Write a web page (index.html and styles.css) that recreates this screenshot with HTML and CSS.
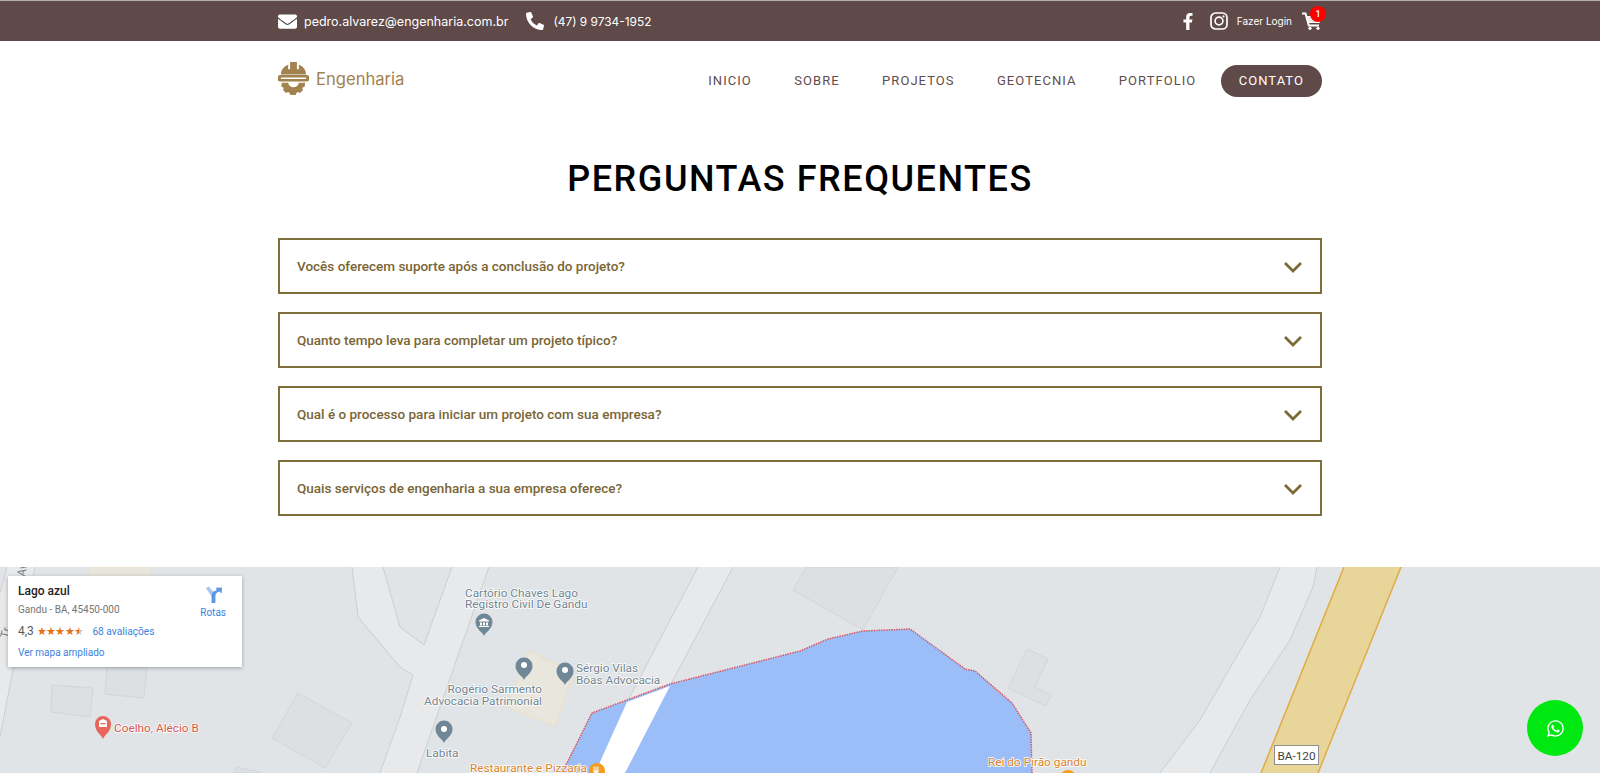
FILE: index.html
```html
<!DOCTYPE html>
<html lang="pt-BR">
<head>
<meta charset="utf-8">
<title>Engenharia</title>
<link rel="stylesheet" href="styles.css">
</head>
<body>
<div class="topbar">
  <div class="container topbar-inner">
    <div class="contact">
      <a class="contact-item">
        <svg class="ico-mail" viewBox="0 0 512 512"><path d="M502.3 190.8c3.9-3.1 9.7-.2 9.7 4.7V400c0 26.5-21.5 48-48 48H48c-26.5 0-48-21.5-48-48V195.6c0-5 5.7-7.8 9.7-4.7 22.4 17.4 52.1 39.5 154.1 113.6 21.1 15.4 56.7 47.8 92.2 47.6 35.7.3 72-32.8 92.3-47.6 102-74.1 131.6-96.3 154-113.7zM256 320c23.2.4 56.6-29.2 73.4-41.4 132.7-96.3 142.8-104.7 173.4-128.7 5.8-4.5 9.2-11.5 9.2-18.9v-19c0-26.5-21.5-48-48-48H48C21.5 64 0 85.5 0 112v19c0 7.4 3.4 14.3 9.2 18.9 30.6 23.9 40.7 32.4 173.4 128.7 16.8 12.2 50.2 41.8 73.4 41.4z"/></svg>
        <span>pedro.alvarez@engenharia.com.br</span>
      </a>
      <a class="contact-item contact-phone">
        <svg class="ico-phone" viewBox="0 0 512 512"><path transform="matrix(-1 0 0 1 512 0)" d="M493.4 24.6l-104-24c-11.3-2.6-22.9 3.3-27.5 13.9l-48 112c-4.2 9.8-1.4 21.3 6.9 28l60.6 49.6c-36 76.7-98.9 140.5-177.2 177.2l-49.6-60.6c-6.8-8.3-18.2-11.1-28-6.9l-112 48C3.9 366.5-2 378.1.6 389.4l24 104C27.1 504.2 36.7 512 48 512c256.1 0 464-207.5 464-464 0-11.2-7.7-20.9-18.6-23.4z"/></svg>
        <span>(47) 9 9734-1952</span>
      </a>
    </div>
    <div class="account">
      <svg class="ico-fb" viewBox="0 0 320 512"><path d="M279.14 288l14.22-92.66h-88.91v-60.13c0-25.35 12.42-50.06 52.24-50.06h40.42V6.26S260.43 0 225.36 0c-73.22 0-121.08 44.38-121.08 124.72v70.62H22.89V288h81.39v224h100.17V288z"/></svg>
      <svg class="ico-ig" viewBox="0 0 18 18"><rect x="1" y="1" width="16" height="16" rx="4.6" class="ig-line"/><circle cx="9" cy="9" r="3.9" class="ig-line"/><circle cx="13.6" cy="4.4" r="1.05"/></svg>
      <span class="login">Fazer Login</span>
      <div class="cart">
        <svg class="ico-cart" viewBox="0 0 20 18">
          <path class="cart-line" d="M0 1.500H3.500L6.800 13.500H17"/>
          <path class="cart-basket" d="M4.800 4.500H19L17.400 10.500H6.400z"/>
          <circle cx="8" cy="16.300" r="1.600"/><circle cx="16" cy="16.300" r="1.600"/>
        </svg>
        <span class="badge">1</span>
      </div>
    </div>
  </div>
</div>

<header class="container header">
  <a class="brand">
    <svg class="logo" viewBox="0 0 32 35">
      <path d="M3 14C3 9 6 5.500 10.500 3.700V8.500h2V1h7v7.500h2V3.700C26.200 5.500 29 9 29 14z"/>
      <path fill-rule="evenodd" d="M2.500 14.500h27a2.500 2.500 0 0 1 0 6.500h-27a2.500 2.500 0 0 1 0-6.500zM3 17v1.500h26V17z"/>
      <path d="M4 22.500h6.500a5.600 5.600 0 0 0 11 0H28l-.5 4-2.500 1 .8 2.500-3 3-2.300-1-1.500.9-.8 2.100h-5.400l-.8-2.100-1.500-.9-2.300 1-3-3 .8-2.500-2.500-1z"/>
    </svg>
    <span class="brand-name">Engenharia</span>
  </a>
  <nav class="nav">
    <a class="nav-link">INICIO</a>
    <a class="nav-link">SOBRE</a>
    <a class="nav-link">PROJETOS</a>
    <a class="nav-link">GEOTECNIA</a>
    <a class="nav-link">PORTFOLIO</a>
    <a class="nav-cta">CONTATO</a>
  </nav>
</header>

<main class="container faq">
  <h1 class="faq-title">PERGUNTAS FREQUENTES</h1>
  <div class="faq-list">
    <div class="faq-item"><span>Vocês oferecem suporte após a conclusão do projeto?</span><svg class="chev" viewBox="0 0 18 10"><path d="M1 1l8 8 8-8"/></svg></div>
    <div class="faq-item"><span>Quanto tempo leva para completar um projeto típico?</span><svg class="chev" viewBox="0 0 18 10"><path d="M1 1l8 8 8-8"/></svg></div>
    <div class="faq-item"><span>Qual é o processo para iniciar um projeto com sua empresa?</span><svg class="chev" viewBox="0 0 18 10"><path d="M1 1l8 8 8-8"/></svg></div>
    <div class="faq-item"><span>Quais serviços de engenharia a sua empresa oferece?</span><svg class="chev" viewBox="0 0 18 10"><path d="M1 1l8 8 8-8"/></svg></div>
  </div>
</main>

<section class="map">
  <svg class="map-canvas" viewBox="0 567 1600 206" preserveAspectRatio="none">
    <!-- local roads -->
    <path class="road" d="M7 567L0 593V737L13 670L35 567z"/>
    <path class="road-edge" d="M35 567L13 670L0 737M7 567L0 593"/>
    <path class="road" d="M352 567L358 617L400 667L413 675L380 773H417L489 567H452L424 645L400 627L383 567z"/>
    <path class="road-edge" d="M352 567L358 617L400 667L413 675L400 717L380 773M383 567L400 627L424 645L452 567M489 567L417 773"/>
    <path class="road" d="M698 567L627 702L595 773H625L670 686L733 567z"/>
    <path class="road-edge" d="M698 567L627 702M733 567L670 686"/>
    <path class="road" d="M1280 567L1260 617L1227 673L1200 720L1160 773H1210L1250 700L1290 640L1313 587L1317 567z"/>
    <path class="road-edge" d="M1280 567L1260 617L1227 673L1200 720L1160 773M1317 567L1313 587L1290 640L1250 700L1210 773"/>
    <!-- buildings -->
    <path class="bld" d="M52 685L93 688L90 717L51 712z"/>
    <path class="bld" d="M107 667H147L144 698L105 694z"/>
    <path class="bld" d="M298 693L352 723L325 768L272 738z"/>
    <path class="bld" d="M233 773L237 767L263 773z"/>
    <path class="bld" d="M793 590L806 567H898L863 630z"/>
    <path class="bld" d="M1027 649L1048 659L1035 687L1051 695L1046 706L1008 688z"/>
    <path class="parcel" d="M90 567H152L150 580H90z"/>
    <path class="parcel" d="M528 651L574 672L555 726L507 707z"/>
    <!-- lake with the strip crossing it -->
    <path class="lake" d="M592 713L670 684L800 651L828 639L863 631L910 629L965 669L975 671L1012 703L1031 733L1032 773H560L567 763z"/>
    <path class="strip" d="M627 702L670 686L625 773H595z"/>
    <path class="lake-edge" d="M560 773L567 763L592 713L670 684L800 651L828 639L863 631L910 629L965 669L975 671L1012 703L1031 733L1032 773"/>
    <!-- highway -->
    <path class="highway" d="M1344 567L1261 773H1318L1401 567z"/>
    <path class="highway-edge" d="M1344 567L1261 773M1401 567L1318 773"/>
    <!-- pins -->
    <g class="pin-gray">
      <path d="M484 636c-1.500-4-8.500-7-8.500-14a8.500 8.500 0 0 1 17 0c0 7-7 10-8.500 14z"/>
      <path d="M524 680c-1.500-4-8.500-7-8.500-14a8.500 8.500 0 0 1 17 0c0 7-7 10-8.500 14z"/>
      <path d="M565 685c-1.500-4-8.500-7-8.500-14a8.500 8.500 0 0 1 17 0c0 7-7 10-8.500 14z"/>
      <path d="M444 743c-1.500-4-8.500-7-8.500-14a8.500 8.500 0 0 1 17 0c0 7-7 10-8.500 14z"/>
    </g>
    <g class="pin-dot">
      <circle cx="524" cy="665" r="3"/><circle cx="565" cy="670" r="3"/><circle cx="444" cy="729" r="3"/>
      <path d="M479 620.500l5-2.500 5 2.500v1h-10zM480 622.500h2v3h-2zM483 622.500h2v3h-2zM486 622.500h2v3h-2zM479 626h10v1h-10z"/>
    </g>
    <path class="pin-red" d="M103 739c-1.500-4-8-7-8-15a8 8 0 0 1 16 0c0 8-6.500 11-8 15z"/>
    <path class="pin-red-in" d="M99 721l4-2 4 2v6h-8zM100.500 723v1.200h5V723z"/>
    <circle class="pin-orange" cx="597" cy="771" r="8"/>
    <path class="pin-dot" d="M593.500 766.500h1v4h1v-4h1v4h1v-4h1v6h-1v1h-3v-1h-1z"/>
    <circle class="pin-orange" cx="1068" cy="778" r="8"/>
    <!-- labels -->
    <g class="lbl-gray">
      <text x="465" y="597">Cartório Chaves Lago</text>
      <text x="465" y="608">Registro Civil De Gandu</text>
      <text x="576" y="672">Sérgio Vilas</text>
      <text x="576" y="684">Bôas Advocacia</text>
      <text x="542" y="693" text-anchor="end">Rogério Sarmento</text>
      <text x="542" y="705" text-anchor="end">Advocacia Patrimonial</text>
      <text x="426" y="757">Labita</text>
    </g>
    <g class="lbl-orange">
      <text x="587" y="772" text-anchor="end">Restaurante e Pizzaria</text>
      <text x="988" y="766">Rei do Pirão gandu</text>
    </g>
    <text class="lbl-red" x="114" y="732">Coelho, Alécio B</text>
    <text class="lbl-road" transform="translate(8 639) rotate(-75)">Tr...</text>
    <text class="lbl-road" transform="translate(25 577) rotate(-80)">Av</text>
    <rect class="shield" x="1274.500" y="745.500" width="44" height="19"/>
    <text class="shield-text" x="1296.500" y="760" text-anchor="middle">BA-120</text>
  </svg>

  <div class="place-card">
    <div class="place-info">
      <div class="place-name">Lago azul</div>
      <div class="place-addr">Gandu - BA, 45450-000</div>
      <div class="place-rating">
        <span class="score">4,3</span>
        <span class="stars">★★★★<span class="star-part">★</span></span>
        <a class="link reviews">68 avaliações</a>
      </div>
      <a class="link bigger">Ver mapa ampliado</a>
    </div>
    <a class="directions">
      <svg class="dir-ico" viewBox="0 0 20 20"><path class="dir-a" d="M2 3.500L5 1.500 11 8.500V12H8z"/><path class="dir-b" d="M8 19V11.500C8 8 10 6 13 6V2.500L19 3 18.500 9 16 6.800C13.500 7.500 12 9 12 12V19z"/></svg>
      <span>Rotas</span>
    </a>
  </div>
</section>

<a class="whats">
  <svg viewBox="0 0 448 512"><path d="M380.9 97.1C339 55.1 283.2 32 223.9 32c-122.4 0-222 99.6-222 222 0 39.1 10.2 77.3 29.6 111L0 480l117.7-30.9c32.4 17.7 68.9 27 106.1 27h.1c122.3 0 224.1-99.6 224.1-222 0-59.3-25.2-115-67.1-157zm-157 341.6c-33.2 0-65.7-8.9-94-25.7l-6.7-4-69.8 18.3L72 359.2l-4.4-7c-18.5-29.4-28.2-63.3-28.2-98.2 0-101.7 82.8-184.5 184.6-184.5 49.3 0 95.6 19.2 130.4 54.1 34.8 34.9 56.2 81.2 56.1 130.5 0 101.8-84.9 184.6-186.6 184.6zm101.2-138.2c-5.5-2.8-32.8-16.2-37.9-18-5.1-1.9-8.8-2.8-12.5 2.8-3.7 5.6-14.3 18-17.6 21.8-3.2 3.7-6.5 4.2-12 1.4-32.6-16.3-54-29.1-75.5-66-5.7-9.8 5.7-9.1 16.3-30.3 1.8-3.7.9-6.9-.5-9.7-1.4-2.8-12.5-30.1-17.1-41.2-4.5-10.8-9.1-9.3-12.5-9.5-3.2-.2-6.9-.2-10.6-.2-3.7 0-9.7 1.4-14.8 6.9-5.1 5.6-19.4 19-19.4 46.3 0 27.3 19.9 53.7 22.6 57.4 2.8 3.7 39.1 59.7 94.8 83.8 35.2 15.2 49 16.5 66.6 13.9 10.7-1.6 32.8-13.4 37.4-26.4 4.6-13 4.6-24.1 3.2-26.4-1.3-2.5-5-3.9-10.5-6.6z"/></svg>
</a>
</body>
</html>
```
FILE: styles.css
```css
* { box-sizing: border-box; }
html, body { height: 100%; }
body {
  margin: 0;
  height: 773px;
  overflow: hidden;
  display: flex;
  flex-direction: column;
  font-family: Roboto, "Liberation Sans", sans-serif;
  background: #fff;
}
.container { width: 1044px; margin: 0 auto; }

/* top bar */
.topbar {
  height: 41px;
  background: #604949;
  border-top: 1px solid #b3b0b0;
  color: #fff;
  flex: none;
}
.topbar-inner { height: 100%; display: flex; justify-content: space-between; align-items: center; }
.contact { display: flex; align-items: center; gap: 18px; }
.contact-item { display: flex; align-items: center; font-family: Inter, sans-serif; font-size: 12.5px; }
.contact-phone { font-size: 11.9px; }
.contact-item svg { fill: #fff; flex: none; }
.ico-mail { width: 19px; height: 19px; margin-right: 7px; }
.ico-phone { width: 18px; height: 18px; margin-right: 9px; }
.account { display: flex; align-items: center; }
.account svg { fill: #fff; }
.ico-fb { width: 12px; height: 17px; margin-right: 16px; }
.ico-ig { width: 18px; height: 18px; margin-right: 9px; }
.ig-line { fill: none; stroke: #fff; stroke-width: 1.7; }
.login { font-family: Inter, sans-serif; font-size: 10px; margin-right: 10px; }
.cart { position: relative; width: 20px; height: 18px; }
.ico-cart { width: 20px; height: 18px; display: block; }
.cart-line { fill: none; stroke: #fff; stroke-width: 2; }
.cart-basket { fill: #ebe7e7; stroke: #fff; stroke-width: 1; }
.badge {
  position: absolute; left: 8px; top: -6px;
  width: 16px; height: 16px; border-radius: 50%;
  background: #f00; color: #fff;
  font: 500 9px/16px Roboto, sans-serif; text-align: center;
}

/* header */
.header { display: flex; justify-content: space-between; align-items: center; height: 80px; flex: none; }
.brand { display: flex; align-items: center; gap: 7px; margin-bottom: 4px; }
.logo { width: 31px; height: 34px; fill: #a2824e; margin-bottom: 2px; }
.brand-name { font-family: Inter, sans-serif; font-size: 16.6px; color: #a2824e; }
.nav { display: flex; align-items: center; gap: 42.4px; }
.nav-link { font-size: 13px; letter-spacing: 1.05px; color: #5f4d4d; margin-bottom: 1px; }
.nav-cta {
  margin-left: -18px;
  padding: 0 18px;
  height: 32px; line-height: 32px;
  background: #604949; color: #fff;
  border-radius: 16px;
  font-size: 13px; letter-spacing: 1.05px;
}

/* faq */
.faq { flex: none; height: 446px; }
.faq-title {
  margin: 0; height: 117px; padding-top: 33px;
  text-align: center; font-size: 36px; line-height: 50px;
  font-weight: 500; letter-spacing: 1.55px; color: #000;
}
.faq-list { display: flex; flex-direction: column; gap: 18px; }
.faq-item {
  height: 56px;
  border: 2px solid #7f6f3d;
  padding: 0 18px 0 17px;
  display: flex; justify-content: space-between; align-items: center;
  font-size: 13.5px; font-weight: 500; color: #7a6535;
}
.chev { width: 18px; height: 10px; fill: none; stroke: #7a6a35; stroke-width: 2.7; position: relative; top: 1px; overflow: visible; }

/* map */
.map { position: relative; flex: 1; background: #e1e4e7; overflow: hidden; }
.map-canvas { position: absolute; inset: 0; width: 100%; height: 100%; font-family: Roboto, sans-serif; }
.road { fill: #e7e9eb; }
.road-edge { fill: none; stroke: #cbced2; stroke-width: 1; }
.bld { fill: #dde0e3; stroke: #d3d6d9; stroke-width: 1; }
.parcel { fill: #e9e6de; stroke: #eddfc0; stroke-width: 1; }
.lake { fill: #9bbef8; }
.strip { fill: #fff; }
.lake-edge { fill: none; stroke: #d9555f; stroke-width: 1.5; stroke-dasharray: 1.500 1; }
.highway { fill: #e7d59a; }
.highway-edge { fill: none; stroke: #e0ab45; stroke-width: 1.500; }
.pin-gray { fill: #6f8796; }
.pin-dot { fill: #fff; }
.pin-red { fill: #e8675d; }
.pin-red-in { fill: #fff; fill-rule: evenodd; }
.pin-orange { fill: #f29d1f; }
.lbl-gray text, .lbl-orange text, .lbl-red, .shield-text, .lbl-road { font-size: 11.8px; }
.lbl-gray text { fill: #70848f; paint-order: stroke; stroke: #fff; stroke-width: 1.5px; }
.lbl-orange text { fill: #d9822b; paint-order: stroke; stroke: #fff; stroke-width: 1.5px; }
.lbl-red { fill: #d4554b; paint-order: stroke; stroke: #fff; stroke-width: 1.5px; }
.lbl-road { fill: #7b8287; }
.shield { fill: #fff; stroke: #8f8f8f; stroke-width: 1; }
.shield-text { fill: #444; }

.place-card {
  position: absolute; left: 8px; top: 9px;
  width: 234px; height: 91px;
  background: #fff;
  box-shadow: 0 1px 4px rgba(0,0,0,.3);
  padding: 8px 10px;
  display: flex; justify-content: space-between;
  font-family: Roboto, sans-serif;
}
.place-name { font-size: 12px; font-weight: 500; color: #222; line-height: 15px; }
.place-addr { font-size: 10px; color: #757575; line-height: 14px; margin-top: 4px; }
.place-rating { display: flex; align-items: center; font-size: 12px; color: #5b5b5b; margin-top: 7px; line-height: 15px; }
.stars { font-size: 11px; color: #e7711b; letter-spacing: -.7px; margin-left: 3px; }
.star-part { background: linear-gradient(90deg, #e7711b 55%, #c4c4c4 55%); -webkit-background-clip: text; background-clip: text; color: transparent; }
.link { font-size: 10px; color: #3b82e0; }
.reviews { margin-left: 9px; font-size: 10.2px; }
.bigger { display: block; margin-top: 8px; }
.directions { display: flex; flex-direction: column; align-items: center; font-size: 10px; color: #3b82e0; margin-right: 6px; margin-top: 1px; }
.dir-ico { width: 19px; height: 19px; margin-bottom: 3px; }
.dir-a { fill: #a9c8ef; }
.dir-b { fill: #5b97e5; }

.whats {
  position: fixed; left: 1527px; top: 700px;
  width: 56px; height: 56px; border-radius: 50%;
  background: #00e812;
  display: flex; align-items: center; justify-content: center;
}
.whats svg { width: 17px; height: 19px; fill: #fff; }
```
